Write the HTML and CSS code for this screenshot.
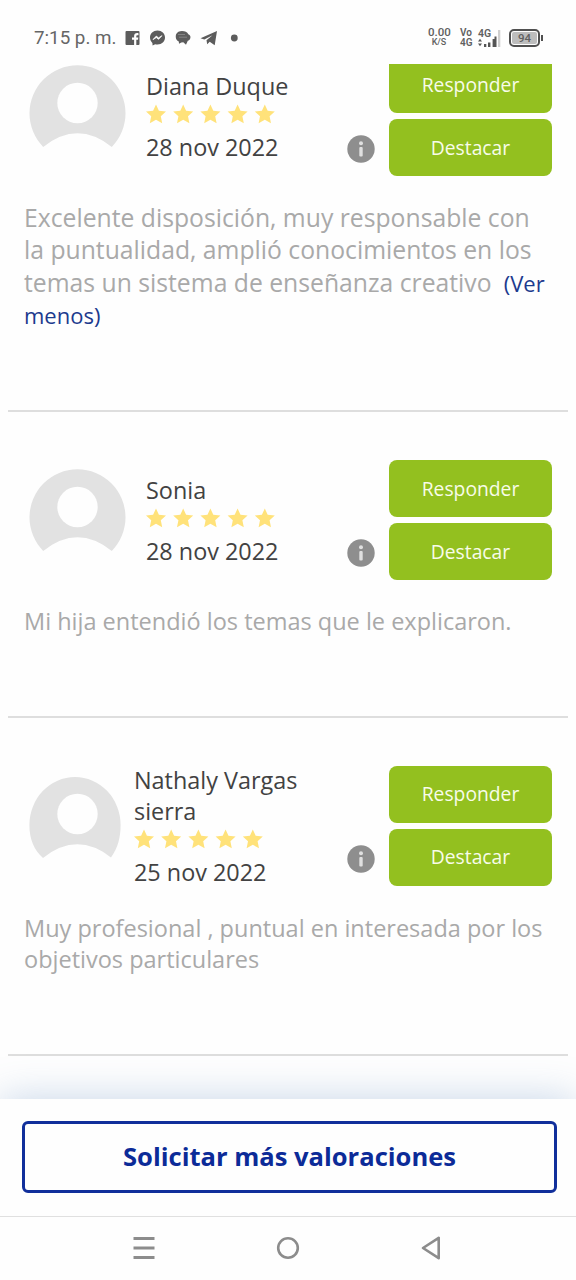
FILE: index.html
```html
<!DOCTYPE html>
<html lang="es">
<head>
<meta charset="utf-8">
<title>Valoraciones</title>
<link rel="stylesheet" href="styles.css">
</head>
<body>
<svg width="0" height="0" class="defs">
  <defs>
    <path id="star" d="M10 0.4 L12.9 6.7 L20 7.5 L14.8 12.2 L16.2 19.2 L10 15.7 L3.8 19.2 L5.2 12.2 L0 7.5 L7.1 6.7Z"/>
    <g id="stars"><use href="#star"/><use href="#star" x="27.2"/><use href="#star" x="54.4"/><use href="#star" x="81.6"/><use href="#star" x="108.8"/></g>
    <g id="info"><circle cx="14" cy="14" r="13.7" fill="#8e8e8e"/><circle cx="14" cy="8.3" r="2" fill="#e0e0e0"/><rect x="12.3" y="12" width="3.4" height="9.4" rx="1" fill="#e0e0e0"/></g>
  </defs>
</svg>
<div class="phone">
  <header class="status">
    <span class="clock">7:15 p. m.</span>
    <svg class="status-apps" width="116" height="18" viewBox="0 0 116 18" fill="#5c5c5c">
      <path d="M2.500 2h12a1 1 0 0 1 1 1v12a1 1 0 0 1-1 1h-2.200v-5.200h1.700l.3-2.200h-2V7.300c0-.7.3-1.100 1.200-1.100h1V4.200c-2.800-.5-4.400.6-4.400 2.700v1.700H8v2.200h2.100V16H2.500a1 1 0 0 1-1-1V3a1 1 0 0 1 1-1z"/>
      <path d="M33.500 1.500c4.300 0 7.500 3 7.500 7s-3.200 7-7.500 7c-.8 0-1.600-.1-2.300-.3L28.600 16.600l-.2-2.700C26.900 12.600 26 10.700 26 8.500c0-4 3.200-7 7.500-7z"/>
      <path d="M29 10.600l3.300-3.500 2.300 1.800 3.300-2.200-3.300 3.600-2.300-1.800z" fill="#fff" stroke="#fff" stroke-width=".8"/>
      <path d="M52 5.500c1-2.500 3.500-3.500 6-3.500 3 0 5.300 1.200 6.300 3.200 2 .8 2.500 2.300 2 4-.4 1.400-1.500 2.200-2.500 2.600L62 15.800l-2.700-2.500-2 .2-2.300 1.300-.2-2.300c-2.300-.9-3.600-3.700-2.800-7z"/>
      <path d="M54 5.500h7M55 8.200h8" stroke="#fff" stroke-width=".7" fill="none" opacity=".35"/>
      <path d="M76.500 9.300L93 2l-2.300 14.300-5-3.600-2.500 2.600-.7-4.100 6-5-8.200 4.400z"/>
      <circle cx="110.300" cy="9" r="3.400"/>
    </svg>
    <div class="speed"><b>0.00</b><small>K/S</small></div>
    <div class="carrier"><span>Vo</span><span>4G</span></div>
    <div class="signal"><span>4G</span>
      <svg width="20" height="9" viewBox="0 0 20 9" fill="#555"><path d="M0 3.500l2-2.700 2 2.700zM0 5.500l2 2.700 2-2.700zM6 6h2.300v3H6zM10 4.500h2.400V9H10zM14.600 1h2.400v8h-2.400z"/></svg>
    </div>
    <svg class="bar-tall" width="8" height="17" viewBox="0 0 8 17"><path d="M1.500 6.500h2V17h-2z" fill="#555"/><path d="M5 0h2.300v17H5z" fill="#cfcfcf"/></svg>
    <div class="battery"><span>94</span></div>
    <i class="battery-cap"></i>
  </header>

  <main class="reviews">
    <article class="review review-long">
      <div class="top">
        <svg class="avatar" width="96" height="96" viewBox="0 0 96 96"><path d="M14.200 80.900A48 48 0 1 1 82.800 80.900Q48.500 53.500 14.200 80.900Z" fill="#e2e2e2"/><circle cx="48.500" cy="37" r="20.200" fill="#fefefe"/></svg>
        <div class="who">
          <div class="name">Diana Duque</div>
          <svg class="stars" width="130" height="20"><use href="#stars"/></svg>
          <div class="date">28 nov 2022</div>
        </div>
        <svg class="info" width="28" height="28"><use href="#info"/></svg>
        <div class="actions"><button>Responder</button><button>Destacar</button></div>
      </div>
      <p class="comment">Excelente disposición, muy responsable con<br>la puntualidad, amplió conocimientos en los<br>temas un sistema de enseñanza creativo <a class="less">&nbsp;(Ver<br>menos)</a></p>
    </article>

    <article class="review review-short">
      <div class="top">
        <svg class="avatar" width="96" height="96" viewBox="0 0 96 96"><path d="M14.200 80.900A48 48 0 1 1 82.800 80.900Q48.500 53.500 14.200 80.900Z" fill="#e2e2e2"/><circle cx="48.500" cy="37" r="20.200" fill="#fefefe"/></svg>
        <div class="who">
          <div class="name">Sonia</div>
          <svg class="stars" width="130" height="20"><use href="#stars"/></svg>
          <div class="date">28 nov 2022</div>
        </div>
        <svg class="info" width="28" height="28"><use href="#info"/></svg>
        <div class="actions"><button>Responder</button><button>Destacar</button></div>
      </div>
      <p class="comment">Mi hija entendió los temas que le explicaron.</p>
    </article>

    <article class="review review-medium">
      <div class="top">
        <svg class="avatar" width="92" height="96" viewBox="0 0 92 96"><path d="M14 81C5 73 .4 62 .4 48A45.600 48 0 0 1 91.600 48C91.600 60 89 71 82 80.500Q48 54 14 81Z" fill="#e2e2e2"/><circle cx="48.500" cy="37" r="20.200" fill="#fefefe"/></svg>
        <div class="who">
          <div class="name">Nathaly Vargas<br>sierra</div>
          <svg class="stars" width="130" height="20"><use href="#stars"/></svg>
          <div class="date">25 nov 2022</div>
        </div>
        <svg class="info" width="28" height="28"><use href="#info"/></svg>
        <div class="actions"><button>Responder</button><button>Destacar</button></div>
      </div>
      <p class="comment">Muy profesional , puntual en interesada por los<br>objetivos particulares</p>
    </article>
  </main>

  <footer class="request"><button class="request-button">Solicitar más valoraciones</button></footer>

  <nav class="system-nav">
    <svg width="24" height="24" viewBox="0 0 24 24" stroke="#8c8c8c" stroke-width="3"><path d="M1.500 2.500h21M1.500 12h21M1.500 21.500h21"/></svg>
    <svg width="24" height="24" viewBox="0 0 24 24" fill="none" stroke="#8c8c8c" stroke-width="2.600"><circle cx="12" cy="12" r="9.800"/></svg>
    <svg width="24" height="24" viewBox="0 0 24 24" fill="none" stroke="#8c8c8c" stroke-width="2.600" stroke-linejoin="round"><path d="M18.700 1.800v20.400L3 12z"/></svg>
  </nav>
</div>
</body>
</html>
```
FILE: styles.css
```css
* { box-sizing: border-box; }
body { margin: 0; background: #fefefe; font-family: "Open Sans", "Noto Sans", sans-serif; }
.defs { position: absolute; }
.phone { display: flex; flex-direction: column; height: 1280px; overflow: hidden; }

.status { height: 64px; flex: none; display: flex; align-items: flex-start; padding: 26px 0 0 34px; font-family: Roboto, sans-serif; color: #606060; }
.clock { font-size: 18.800px; line-height: 25px; width: 90px; white-space: nowrap; color: #666; }
.status-apps { margin-top: 3px; }
.speed { margin-left: 188px; width: 22px; text-align: center; }
.speed b { display: block; font-weight: 500; font-size: 11.500px; line-height: 12px; }
.speed small { display: block; font-weight: 500; font-size: 9px; line-height: 8px; }
.carrier { margin: 2px 0 0 10px; width: 15px; font-weight: 600; font-size: 10px; line-height: 10px; }
.carrier span { display: block; }
.signal { margin: 3px 0 0 3px; width: 16px; font-weight: 600; font-size: 10.500px; line-height: 9px; }
.signal span { display: block; }
.signal svg { display: block; }
.bar-tall { margin: 4px 0 0 -1px; }
.battery { margin: 3px 0 0 8px; width: 31px; height: 18px; border: 2px solid #505050; border-radius: 5px; padding: 1px; }
.battery span { display: block; height: 12px; background: #bdbdbd; border-radius: 2px; font-weight: 500; font-size: 11.500px; line-height: 12.500px; text-align: center; }
.battery-cap { margin: 9px 0 0 1px; width: 2px; height: 6px; background: #505050; }

.reviews { flex: none; height: 1035px; overflow: hidden; padding: 0 8px; }
.review { border-bottom: 2px solid #dedede; padding: 0 16px; }
.review-long { height: 356px; margin-top: -8px; }
.review-short { height: 306px; padding-top: 48px; }
.review-medium { height: 338px; padding-top: 47px; }
.top { display: flex; align-items: center; padding-left: 5px; }
.avatar { flex: none; margin-bottom: 4px; overflow: visible; }
.who { flex: 1; padding: 2px 0 0 21px; }
.review-medium .who { padding: 0 0 0 13px; }
.name, .date { font-size: 23.400px; line-height: 31px; color: #424242; white-space: nowrap; }
.stars { display: block; margin: 2px 0 8px; fill: #ffe27a; }
.info { margin: 65px 14px 0 0; }
.review-medium .info { margin-top: 64px; }
.actions { display: flex; flex-direction: column; gap: 6px; width: 163px; }
.review-medium .actions { margin-bottom: 2px; }
.actions button { height: 57px; border: 0; border-radius: 8px; padding: 0; background: #93c01f; color: #f8fce9; font: 19.300px/56px "Open Sans", sans-serif; }
.comment { margin: 26px 0 0; font-size: 23.500px; line-height: 31px; color: #a9a9a9; white-space: nowrap; }
.review-medium .comment { margin-top: 25px; line-height: 30.500px; }
.review-long .comment { margin-top: 26px; font-size: 24.720px; line-height: 32.400px; }
.less { color: #1c3a8e; font-size: 22px; }

.request { position: relative; flex: none; height: 117px; padding: 22px 19px 0 22px; background: #fefefe; box-shadow: 0 0 40px rgba(90, 135, 190, .34); }
.request-button { width: 100%; height: 72px; border: 3px solid #112f9b; border-radius: 6px; background: #fefefe; color: #0c2b98; font: 700 25.550px/64px "Open Sans", sans-serif; padding: 0 0 2px; }
.system-nav { position: relative; flex: none; height: 64px; border-top: 1px solid #e0e0e0; background: #fefefe; display: flex; justify-content: space-between; align-items: center; padding: 0 132px 2px; }
```
